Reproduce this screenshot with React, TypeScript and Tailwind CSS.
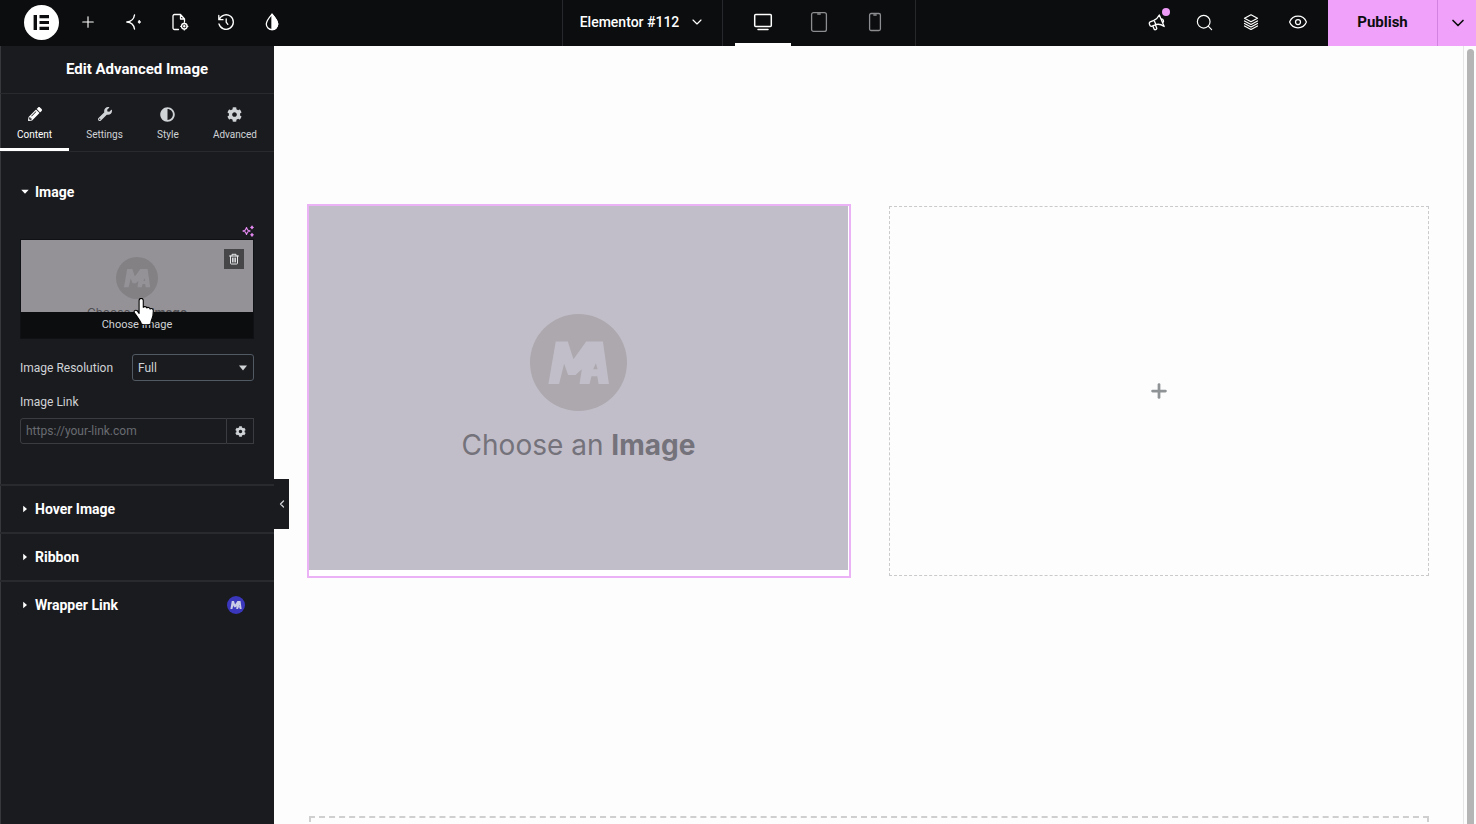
import { useState } from 'react';
import type { ReactNode } from 'react';
import { ChevronDown, ChevronLeft, Eye, Plus, Search } from 'lucide-react';
import { FaAdjust, FaCog, FaPencilAlt, FaWrench } from 'react-icons/fa';

const ElementorLogo = () => (
  <svg viewBox="0 0 35 35" className="size-[35px]" aria-hidden="true">
    <circle cx="17.5" cy="17.5" r="17.5" fill="#fff" />
    <path d="M9.600 10h3.400v15H9.600zM15.500 10h9.500v3.200h-9.500zM15.500 15.900h9.500v3.200h-9.500zM15.500 21.800h9.500v3.200h-9.500z" fill="#0c0d0e" />
  </svg>
);

const AiIcon = () => (
  <svg viewBox="0 0 20 20" className="size-5" fill="none" stroke="currentColor" strokeWidth="1.4" strokeLinecap="round" strokeLinejoin="round">
    <path d="M10.500 3C9.800 7.500 7.500 9.600 2.800 10c4.700.400 7 2.500 7.700 7" />
    <path d="M15.300 8.600l.4 1 1 .4-1 .4-.4 1-.4-1-1-.4 1-.4z" fill="currentColor" strokeWidth="1" />
  </svg>
);

const PageSettingsIcon = () => (
  <svg viewBox="0 0 20 20" className="size-5" fill="none" stroke="currentColor" strokeWidth="1.3" strokeLinecap="round" strokeLinejoin="round">
    <path d="M8.500 17.500H4.500a1.500 1.500 0 0 1-1.500-1.500V4a1.500 1.500 0 0 1 1.500-1.500h6L14.500 7v2.500M10.500 2.500V7h4" />
    <circle cx="14.300" cy="14.300" r="2.800" />
    <circle cx="14.300" cy="14.300" r=".6" fill="currentColor" />
    <path d="M14.300 10.700v.8M14.300 17.100v.8M10.700 14.300h.8M17.100 14.300h.8" />
  </svg>
);

const HistoryIcon = () => (
  <svg viewBox="0 0 20 20" className="size-5" fill="none" stroke="currentColor" strokeWidth="1.300" strokeLinecap="round" strokeLinejoin="round">
    <path d="M3.200 7.500A7.300 7.300 0 1 1 3 12M2.800 3.500v4.200H7M10.200 6.800v3.400l1.600 2.200" />
  </svg>
);

const DropIcon = () => (
  <svg viewBox="0 0 20 20" className="size-5" fill="none" stroke="currentColor" strokeWidth="1.300" strokeLinejoin="round">
    <path d="M10 2.200C7 5.700 4.300 8.800 4.300 12a5.700 5.700 0 0 0 11.400 0C15.700 8.800 13 5.700 10 2.200z" />
    <path d="M10 2.200v15.500a5.700 5.700 0 0 0 5.700-5.700C15.700 8.800 13 5.700 10 2.200z" fill="currentColor" />
  </svg>
);

const DesktopIcon = () => (
  <svg viewBox="0 0 20 20" className="size-5" fill="none" stroke="currentColor" strokeWidth="1.500" strokeLinecap="round">
    <rect x="1.700" y="2.500" width="16.600" height="12" rx="1" />
    <path d="M5 17.500h10" />
  </svg>
);

const TabletIcon = () => (
  <svg viewBox="0 0 20 24" className="h-6 w-5" fill="none" stroke="currentColor" strokeWidth="1.300" strokeLinecap="round">
    <rect x="2.600" y="2.600" width="14.800" height="18.800" rx="2" />
    <path d="M8.700 4h2.600" />
  </svg>
);

const MobileIcon = () => (
  <svg viewBox="0 0 20 24" className="h-6 w-5" fill="none" stroke="currentColor" strokeWidth="1.300" strokeLinecap="round">
    <rect x="4.600" y="3.500" width="10.800" height="17" rx="1.500" />
    <path d="M8.800 5h2.400" />
  </svg>
);

const MegaphoneIcon = () => (
  <svg viewBox="0 0 20 20" className="size-5" fill="none" stroke="currentColor" strokeWidth="1.300" strokeLinecap="round" strokeLinejoin="round">
    <path d="M12.300 3l4.900 11.500M12.300 3C11 5.600 9.500 7.200 7 8.300L3.200 9.900a1.500 1.500 0 0 0-.8 2l.6 1.500a1.500 1.500 0 0 0 2 .8l3.900-1.600c2.700-.9 5-.4 8.300 1.900M7 8.300l1.900 4.300M5.800 14l1.400 3.200a.9.9 0 0 0 1.200.5l.8-.4a.9.900 0 0 0 .5-1.200l-1.400-3.400M14 7a2.200 2.200 0 0 1 1.700 3.900" />
  </svg>
);

const StructureIcon = () => (
  <svg viewBox="0 0 20 20" className="size-5" fill="none" stroke="currentColor" strokeWidth="1.200" strokeLinecap="round" strokeLinejoin="round">
    <path d="M10 2.800l6.500 3.500L10 9.800 3.500 6.300zM3.500 9l6.500 3.500L16.500 9M3.500 11.500L10 15l6.500-3.500M3.500 14l6.500 3.500 6.500-3.500" />
  </svg>
);

const SparkleIcon = () => (
  <svg viewBox="0 0 12 12" className="size-3" fill="none" stroke="#e88bf5" strokeWidth="1.100" strokeLinejoin="round">
    <path d="M4.500 2.500L5.600 5l2.500 1-2.500 1-1.100 2.500L3.400 7 .9 6l2.500-1z" />
    <path d="M10 1l.4 1 .9.4-.9.400-.4 1-.4-1-.9-.4.900-.4zM10 8.400l.4 1 .9.400-.9.400-.4 1-.4-1-.9-.4.900-.4z" fill="#e88bf5" />
  </svg>
);

const TrashIcon = () => (
  <svg viewBox="0 0 12 12" className="size-3" fill="none" stroke="#e6e8ea" strokeWidth="1" strokeLinecap="round" strokeLinejoin="round">
    <path d="M1.500 3h9M4 3V1.300h4V3M2.500 3v7.200c0 .5.300.8.800.8h5.400c.5 0 .8-.3.8-.8V3M4.600 5v4M6 5v4M7.400 5v4" />
  </svg>
);

const HandCursor = () => (
  <svg viewBox="0 1 19 24.500" className="h-[27px] w-[21px]" stroke="#000" strokeWidth="1" strokeLinejoin="round">
    <path
      d="M5.500 15V3.200a1.900 1.900 0 0 1 3.800 0v6.300c.3-1 3-1 3.200.6.500-1 2.900-.7 3 .9.700-.8 2.900-.4 2.900 1.500 0 3.500-.3 6-1.600 8.500-.4.900-.6 2-.6 3.500-2.500 1-6.500 1-8.700 0-.3-1.800-1.500-3-2.600-4.800C3.700 17.800 2.600 16 1.400 14.600c-1.300-1.800.8-3.200 2.300-2z"
      fill="#fff"
    />
  </svg>
);

const Caret = ({ open = false }: { open?: boolean }) => (
  <svg viewBox="0 0 8 8" className="size-2" fill="#fff" aria-hidden="true">
    {open ? <path d="M.3 1.700h7.400L4 5.700z" /> : <path d="M2.200.7v6.600L6 4z" />}
  </svg>
);

const MasterLogo = ({ className, circle, letters }: { className: string; circle: string; letters: string }) => (
  <svg viewBox="0 0 290 290" className={className} aria-hidden="true">
    <circle cx="145" cy="145" r="145" fill={circle} />
    <path
      fill={letters}
      fillRule="evenodd"
      d="M55 209L77 82h36l17 53 38-53h50l18 127h-31l-4-23h-17l-6 23h-30l7-44-19 17h-22l-12-33-15 60zM197 147l-8 18h13z"
    />
  </svg>
);

const BarButton = ({ label, children }: { label: string; children: ReactNode }) => (
  <button aria-label={label} className="flex h-full w-[46px] items-center justify-center pb-0.5 text-white">
    {children}
  </button>
);

const TopBar = () => {
  const [device, setDevice] = useState('Desktop');

  const devices = [
    { name: 'Desktop', icon: <DesktopIcon /> },
    { name: 'Tablet', icon: <TabletIcon /> },
    { name: 'Mobile', icon: <MobileIcon /> },
  ];

  return (
    <header className="grid h-[46px] shrink-0 grid-cols-[1fr_auto_1fr] bg-[#0c0d0e] pl-0.5">
      <div className="flex items-center pl-[22px]">
        <button aria-label="Elementor" className="mr-1.5 pb-px">
          <ElementorLogo />
        </button>
        <BarButton label="Add Element"><Plus size={18} strokeWidth={1.5} /></BarButton>
        <BarButton label="AI"><AiIcon /></BarButton>
        <BarButton label="Page Settings"><PageSettingsIcon /></BarButton>
        <BarButton label="History"><HistoryIcon /></BarButton>
        <BarButton label="Site Settings"><DropIcon /></BarButton>
      </div>

      <div className="flex border-x border-[#26282b]">
        <button className="flex w-40 items-center justify-center gap-2.5 border-r border-[#26282b] pb-0.5 text-sm font-medium text-white">
          Elementor #112
          <ChevronDown size={16} strokeWidth={1.75} />
        </button>
        <div className="flex px-3">
          {devices.map((d) => (
            <button
              key={d.name}
              aria-label={d.name}
              onClick={() => setDevice(d.name)}
              className={
                device === d.name
                  ? 'flex w-14 items-center justify-center border-b-3 border-white pt-px text-white'
                  : 'flex w-14 items-center justify-center border-b-3 border-transparent pt-px text-[#8b8d90]'
              }
            >
              {d.icon}
            </button>
          ))}
        </div>
      </div>

      <div className="flex items-center justify-end">
        <div className="mr-[7px] flex h-full gap-px">
          <div className="relative flex">
            <BarButton label="What's New"><MegaphoneIcon /></BarButton>
            <span className="absolute top-2 right-2.5 size-2 rounded-full bg-[#ee9bf8]" />
          </div>
          <BarButton label="Finder"><Search size={19} strokeWidth={1.5} /></BarButton>
          <BarButton label="Structure"><StructureIcon /></BarButton>
          <BarButton label="Preview"><Eye size={20} strokeWidth={1.5} /></BarButton>
        </div>
        <button className="h-full w-[110px] border-r border-[#d183df] bg-[#f0a1fa] pb-0.5 text-[15px] font-bold text-[#0c0d0e]">
          Publish
        </button>
        <button aria-label="Save Options" className="flex h-full w-[38px] items-center justify-center bg-[#f0a1fa] pl-0.5 text-[#0c0d0e]">
          <ChevronDown size={20} strokeWidth={2} />
        </button>
      </div>
    </header>
  );
};

const Section = ({ title, children }: { title: string; children?: ReactNode }) => (
  <button className="flex h-12 w-full items-center gap-1.5 border-t-2 border-[#292a2e] px-[21px] text-left text-sm font-bold text-white">
    <Caret />
    {title}
    {children}
  </button>
);

const Sidebar = () => {
  const [tab, setTab] = useState('Content');
  const [resolution, setResolution] = useState('Full');
  const [link, setLink] = useState('');

  const tabs = [
    { name: 'Content', icon: <FaPencilAlt size={14} /> },
    { name: 'Settings', icon: <FaWrench size={14} /> },
    { name: 'Style', icon: <FaAdjust size={15} /> },
    { name: 'Advanced', icon: <FaCog size={15} /> },
  ];

  return (
    <aside className="relative w-[274px] shrink-0 bg-[#1a1b1f] text-[#d0d3d6] shadow-[inset_1px_0_0_#37383c]">
      <h1 className="flex h-12 items-center justify-center border-b border-[#292a2e] text-[15px] font-bold text-white">
        Edit Advanced Image
      </h1>

      <nav className="flex h-[58px] justify-between border-b border-[#292a2e]">
        {tabs.map((t) => (
          <button
            key={t.name}
            onClick={() => setTab(t.name)}
            className={
              tab === t.name
                ? 'flex flex-col items-center gap-[7px] border-b-3 border-white px-[17px] pt-3 text-[10px] leading-3 text-white'
                : 'flex flex-col items-center gap-[7px] border-b-3 border-transparent px-[17px] pt-3 text-[10px] leading-3'
            }
          >
            <span className="flex h-4 items-center">{t.icon}</span>
            {t.name}
          </button>
        ))}
      </nav>

      <div className="pt-4">
        <button className="flex h-12 w-full items-center gap-1.5 px-[21px] text-sm font-bold text-white">
          <Caret open />
          Image
        </button>

        <div className="px-5 pt-[9px] pb-10">
          <div className="flex justify-end pb-0.5">
            <button aria-label="Create with AI"><SparkleIcon /></button>
          </div>

          <div className="relative">
            <button className="block h-[100px] w-full border border-[#101114] bg-[#949297] text-[11px] text-[#d0d3d6]">
              <span className="flex h-[72px] flex-col items-center overflow-hidden pt-[17px]">
                <MasterLogo className="size-[42px] shrink-0" circle="#838184" letters="#949297" />
                <span className="mt-1 shrink-0 font-[Inter,sans-serif] text-xs leading-5 text-[#4f4e52]">
                  Choose an <b className="font-bold">Image</b>
                </span>
              </span>
              <span className="flex h-[26px] items-center justify-center bg-[#0c0d0e]">Choose Image</span>
            </button>
            <button aria-label="Remove image" className="absolute top-2.5 right-2.5 flex size-5 items-center justify-center bg-[#464648]">
              <TrashIcon />
            </button>
            <div className="pointer-events-none absolute top-[59px] left-[113px]">
              <HandCursor />
            </div>
          </div>

          <div className="flex items-center justify-between pt-[15px]">
            <label htmlFor="resolution" className="text-xs">Image Resolution</label>
            <div className="relative">
              <select
                id="resolution"
                value={resolution}
                onChange={(e) => setResolution(e.target.value)}
                className="block h-[27px] w-[122px] appearance-none rounded-[3px] border border-[#515962] bg-transparent px-[5px] text-xs"
              >
                <option>Full</option>
                <option>Large</option>
                <option>Medium</option>
                <option>Thumbnail</option>
              </select>
              <svg viewBox="0 0 10 6" className="pointer-events-none absolute top-[11px] right-1.5 h-1.5 w-2.5" fill="#d0d3d6">
                <path d="M1 .5h8L5 5.500z" />
              </svg>
            </div>
          </div>

          <label htmlFor="link" className="block pt-3 text-xs leading-[18px]">Image Link</label>
          <div className="flex pt-[7px]">
            <input
              id="link"
              type="text"
              placeholder="https://your-link.com"
              value={link}
              onChange={(e) => setLink(e.target.value)}
              className="h-[26px] min-w-0 flex-1 rounded-l-[3px] border border-[#3a3c41] bg-transparent px-[5px] text-xs placeholder:text-[#696c71]"
            />
            <button aria-label="Link Options" className="flex w-[27px] items-center justify-center border border-l-0 border-[#3a3c41]">
              <FaCog size={11} />
            </button>
          </div>
        </div>
      </div>

      <Section title="Hover Image" />
      <Section title="Ribbon" />
      <Section title="Wrapper Link">
        <MasterLogo className="mr-2 ml-auto size-[18px]" circle="#3a37bd" letters="#c9cae6" />
      </Section>

      <button
        aria-label="Hide Panel"
        className="absolute top-[433px] left-full z-10 flex h-[50px] w-[15px] items-center justify-center bg-[#1a1b1f] text-[#d0d3d6]"
      >
        <ChevronLeft size={12} strokeWidth={2.5} />
      </button>
    </aside>
  );
};

const Canvas = () => (
  <main className="min-w-0 flex-1 overflow-hidden pt-40 pr-[34px] pl-[35px]">
    <div className="grid h-[370px] grid-cols-2 gap-10">
      <div className="bg-white pr-px pb-1.5 outline-2 outline-[#ebb2f5]">
        <div className="flex h-full flex-col items-center bg-[#c2bec9] pt-[108px]">
          <MasterLogo className="size-[97px]" circle="#aca8ae" letters="#c2bec9" />
          <p className="mt-3.5 font-[Inter,sans-serif] text-[28px] leading-10 text-[#74727a]">
            Choose an <b className="font-bold">Image</b>
          </p>
        </div>
      </div>
      <div className="flex items-center justify-center border border-dashed border-[#c9cacb]">
        <button aria-label="Add Element" className="text-[#8f9396]">
          <Plus size={22} strokeWidth={3} />
        </button>
      </div>
    </div>
    <div className="mt-60 h-40 border-2 border-dashed border-[#cfcfcf]" />
  </main>
);

export default function App() {
  return (
    <div className="flex h-screen flex-col overflow-hidden bg-[#fdfdfd] font-[Roboto,sans-serif]">
      <TopBar />
      <div className="flex min-h-0 flex-1">
        <Sidebar />
        <Canvas />
        <div className="flex w-[13px] border-l border-[#e6e6e6] pt-[3px] pr-0.5 pl-[3px]">
          <div className="flex-1 rounded-t-full bg-[#b5b5b5]" />
        </div>
      </div>
    </div>
  );
}
